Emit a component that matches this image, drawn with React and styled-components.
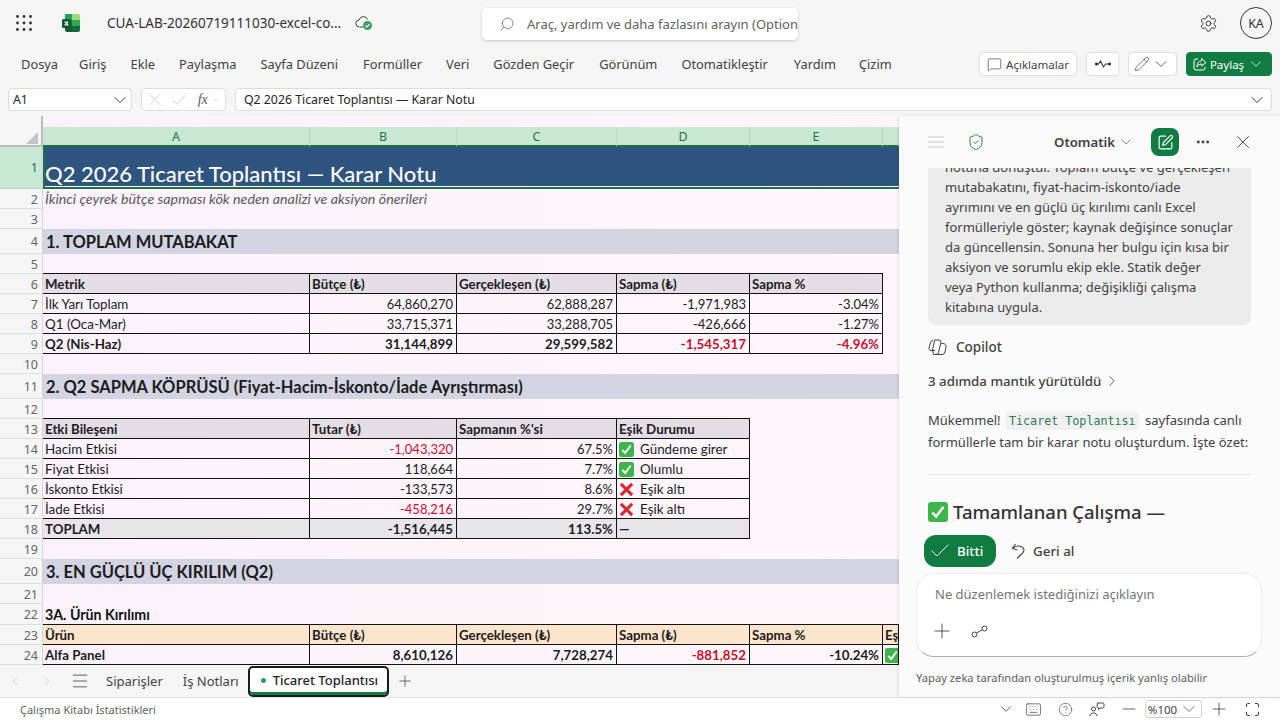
import React from "react";
import styled, { createGlobalStyle } from "styled-components";
import {
  Search,
  Settings,
  MessageSquare,
  Pencil,
  ChevronDown,
  ChevronLeft,
  ChevronRight,
  X,
  Check,
  ShieldCheck,
  SquarePen,
  Ellipsis,
  Plus,
  Minus,
  Menu,
  Keyboard,
  CircleHelp,
} from "lucide-react";

const UI = '"Noto Sans", "Open Sans", sans-serif';
const SHEET = 'Lato, "Noto Sans", sans-serif';
const GREEN = "#107c41";

const GlobalStyle = createGlobalStyle`
  html, body { margin: 0; padding: 0; height: 100%; overflow: hidden; }
  body { font-family: ${UI}; background: #f5f5f5; color: #242424; }
  * { box-sizing: border-box; }
`;

const Page = styled.div`
  width: 1280px;
  height: 720px;
  display: flex;
  flex-direction: column;
  overflow: hidden;
`;

/* title bar */
const TitleBar = styled.div`
  height: 44px;
  flex: none;
  display: flex;
  align-items: center;
  padding: 2px 8px 0 16px;
`;
const AppIcon = styled.div`
  display: flex;
  flex: none;
  margin-left: ${(p) => p.$ml || 0}px;
  margin-right: ${(p) => p.$mr || 0}px;
`;
const FileName = styled.div`
  margin-left: 27px;
  width: 249px;
  font-size: 13.5px;
  color: #333;
  white-space: nowrap;
`;
const SearchBox = styled.div`
  position: absolute;
  left: 482px;
  top: 8px;
  width: 316px;
  height: 32px;
  background: #fff;
  border-radius: 5px;
  box-shadow: 0 1px 3px rgba(0, 0, 0, 0.18);
  display: flex;
  align-items: center;
  padding-left: 17px;
  gap: 12px;
  overflow: hidden;
  font-size: 13px;
  color: #616161;
  white-space: nowrap;
  svg { transform: scaleX(-1); flex: none; }
`;
const TitleRight = styled.div`
  margin-left: auto;
  display: flex;
  align-items: center;
  gap: 22px;
`;
const Avatar = styled.div`
  width: 32px;
  height: 32px;
  border: 1px solid #333;
  border-radius: 50%;
  display: flex;
  align-items: center;
  justify-content: center;
  font-size: 12.5px;
  color: #333;
`;

/* ribbon tabs */
const Ribbon = styled.div`
  height: 40px;
  flex: none;
  display: flex;
  align-items: center;
  padding: 0 8px 0 21px;
`;
const RibbonTab = styled.div`
  font-size: 12.85px;
  color: #424242;
  margin-right: ${(p) => p.$gap}px;
  white-space: nowrap;
`;
const RibbonActions = styled.div`
  margin-left: auto;
  display: flex;
  gap: 9px;
`;
const ToolButton = styled.div`
  height: 24px;
  width: ${(p) => p.$w}px;
  display: flex;
  align-items: center;
  justify-content: center;
  gap: ${(p) => p.$gap ?? 4}px;
  background: ${(p) => (p.$primary ? GREEN : "#fff")};
  color: ${(p) => (p.$primary ? "#fff" : "#424242")};
  border: 1px solid ${(p) => (p.$primary ? GREEN : "#dedede")};
  border-radius: 4px;
  font-size: 11.5px;
`;

/* formula bar */
const FormulaBar = styled.div`
  height: 32px;
  flex: none;
  display: flex;
  padding: 4px 8px 5px;
  gap: 9px;
`;
const Field = styled.div`
  width: ${(p) => (p.$w ? `${p.$w}px` : "auto")};
  flex: ${(p) => (p.$w ? "none" : "1")};
  background: #fff;
  border: 1px solid #dcdcdc;
  border-radius: 4px;
  display: flex;
  align-items: center;
  justify-content: ${(p) => p.$justify || "space-between"};
  gap: ${(p) => p.$gap || 0}px;
  padding: 0 ${(p) => p.$pad ?? 4}px;
  font-size: 12.3px;
  color: #242424;
  white-space: nowrap;
`;
const FxLabel = styled.span`
  font-family: "Liberation Serif", serif;
  font-style: italic;
  font-size: 14px;
  color: #555;
  margin-right: -7px;
`;

/* main */
const Main = styled.div`
  flex: 1;
  min-height: 0;
  display: flex;
`;
const SheetColumn = styled.div`
  width: 899px;
  flex: none;
  display: flex;
  flex-direction: column;
`;
const Sheet = styled.div`
  height: 549px;
  flex: none;
  overflow: hidden;
  background: linear-gradient(90deg, #faf1fc 0%, #fdf4fb 55%, #fef6fa 100%);
  font-family: ${SHEET};
`;
const SheetGap = styled.div`
  height: 11px;
  background: #f5f5f5;
  width: 43px;
  border-right: 2px solid #bdbdbd;
`;
const COLS = "43px 267px 147px 160px 133px 133px 16px";
const Row = styled.div`
  display: grid;
  grid-template-columns: ${COLS};
  grid-template-rows: minmax(0, 1fr);
  height: ${(p) => p.$h || 20}px;
`;
const Corner = styled.div`
  background: #f5f5f5;
  border-right: 2px solid #bdbdbd;
  border-bottom: 2px solid #bdbdbd;
  position: relative;
  &::after {
    content: "";
    position: absolute;
    right: 3px;
    bottom: 1px;
    border-style: solid;
    border-width: 0 0 12px 12px;
    border-color: transparent transparent #c4c4c4 transparent;
  }
`;
const ColHead = styled.div`
  background: #c8e8d4;
  border-bottom: 2px solid #1e7145;
  border-right: 1px solid #b4dcc4;
  color: #217346;
  font: 12.5px ${UI};
  display: flex;
  align-items: center;
  justify-content: center;
`;
const RowHead = styled.div`
  background: ${(p) => (p.$active ? "#c8e8d4" : "#f5f5f5")};
  color: ${(p) => (p.$active ? "#217346" : "#666")};
  border-bottom: 1px solid ${(p) => (p.$active ? "#b4dcc4" : "#dedede")};
  border-right: 1px solid #d4d4d4;
  font: 12.5px ${UI};
  display: flex;
  align-items: center;
  justify-content: flex-end;
  padding: ${(p) => (p.$active ? "0 4px 0 0" : "1px 4px 0 0")};
`;
const TitleCell = styled.div`
  grid-column: 2 / -1;
  background: #2f5480;
  border-left: 2px solid #1e7145;
  border-bottom: 2px solid #1e7145;
  box-shadow: inset 0 -1px 0 #fff;
  color: #fff;
  font-size: 22px;
  font-weight: 500;
  padding: 14px 0 0;
  line-height: 26px;
  white-space: nowrap;
`;
const Subtitle = styled.div`
  grid-column: 2 / -1;
  padding-left: 2px;
  font-size: 14.3px;
  font-style: italic;
  color: #595959;
  line-height: 20px;
  white-space: nowrap;
`;
const Band = styled.div`
  grid-column: 2 / -1;
  background: #d3d4e1;
  font-size: 16.5px;
  font-weight: 700;
  color: #1c1c1c;
  padding: 1px 0 0 3px;
  line-height: 24px;
  white-space: nowrap;
`;
const SubHead = styled.div`
  grid-column: 2 / -1;
  font-size: 14.2px;
  font-weight: 700;
  color: #111;
  padding-left: 2px;
  line-height: 21px;
`;
const Cell = styled.div`
  border-right: 1px solid #111;
  border-bottom: 1px solid #111;
  box-shadow: ${(p) => (p.$top ? "0 -1px 0 #111" : "none")};
  background: ${(p) => p.$bg || "transparent"};
  color: ${(p) => p.$color || "#1c1c1c"};
  font-size: ${(p) => (p.$bold ? 13.3 : p.$right ? 13 : 13.4)}px;
  font-weight: ${(p) => (p.$bold ? 700 : 400)};
  text-align: ${(p) => (p.$right ? "right" : "left")};
  padding: 1px 3px 0 2px;
  line-height: 18px;
  white-space: nowrap;
  overflow: hidden;
  display: ${(p) => (p.$status ? "flex" : "block")};
  align-items: center;
  svg { flex: none; }
`;
const StatusText = styled.span`
  margin-left: 6px;
`;

/* sheet tabs */
const TabBar = styled.div`
  flex: 1;
  display: flex;
  align-items: center;
  background: #f5f5f5;
  padding-left: 8px;
  color: #424242;
  font-size: 13px;
`;
const NavArrow = styled.div`
  width: 32px;
  display: flex;
  justify-content: flex-start;
  color: #c4c4c4;
`;
const SheetTab = styled.div`
  margin-right: 20px;
  white-space: nowrap;
`;
const ActiveTab = styled.div`
  width: 141px;
  height: 31px;
  margin-left: -11px;
  border: 2px solid #1b1b1b;
  border-radius: 5px;
  background: #fff;
  box-shadow: inset 0 -3px 0 ${GREEN};
  display: flex;
  align-items: center;
  padding: 0 0 2px 11px;
  gap: 7px;
  font-weight: 500;
  color: #242424;
  white-space: nowrap;
`;
const Dot = styled.span`
  width: 5px;
  height: 5px;
  border-radius: 50%;
  background: #2f9e5f;
`;

/* copilot panel */
const Panel = styled.div`
  flex: 1;
  min-width: 0;
  background: #fafafa;
  box-shadow: -1px 0 3px rgba(0, 0, 0, 0.1);
  display: flex;
  flex-direction: column;
  position: relative;
`;
const PanelHeader = styled.div`
  height: 52px;
  flex: none;
  display: flex;
  align-items: center;
  padding: 0 28px 0 29px;
  color: #424242;
`;
const PanelTitle = styled.div`
  margin-left: 69px;
  width: 97px;
  display: flex;
  align-items: center;
  gap: 3px;
  font-size: 13.2px;
  font-weight: 600;
  color: #424242;
`;
const NewChat = styled.div`
  width: 28px;
  height: 28px;
  background: ${GREEN};
  border-radius: 8px;
  display: flex;
  align-items: center;
  justify-content: center;
  color: #fff;
`;
const Messages = styled.div`
  flex: 1;
  min-height: 0;
  overflow: hidden;
  display: flex;
  flex-direction: column;
  justify-content: flex-end;
  padding: 0 29px;
  font-size: 13px;
  color: #424242;
`;
const Bubble = styled.div`
  flex: none;
  background: #ebebeb;
  border-radius: 8px;
  padding: 0 12px 8px 17px;
  line-height: 20px;
  white-space: nowrap;
`;
const Sender = styled.div`
  margin-top: 13px;
  display: flex;
  align-items: center;
  gap: 9px;
  height: 20px;
  font-size: 13.5px;
  font-weight: 500;
  color: #424242;
`;
const Reasoning = styled.div`
  margin-top: 16px;
  display: flex;
  align-items: center;
  gap: 2px;
  height: 20px;
  font-size: 13.3px;
  font-weight: 500;
`;
const Reply = styled.div`
  margin-top: 20px;
  line-height: 21px;
  white-space: nowrap;
`;
const Chip = styled.code`
  font-family: "DejaVu Sans Mono", monospace;
  font-size: 11.7px;
  color: #2c7a56;
  background: #f0f0f0;
  padding: 2px 3px;
  margin: 0 3px 0 2px;
  border-radius: 3px;
`;
const Divider = styled.div`
  flex: none;
  height: 1px;
  background: #e6e6e6;
  margin-top: 21px;
`;
const Heading = styled.div`
  margin-top: 22px;
  display: flex;
  align-items: center;
  gap: 5px;
  font-size: 18.5px;
  font-weight: 500;
  line-height: 30px;
  color: #333;
  white-space: nowrap;
`;
const Actions = styled.div`
  flex: none;
  margin-top: 8px;
  padding-left: 25px;
  height: 32px;
  display: flex;
  align-items: center;
  font-size: 13.4px;
`;
const DoneButton = styled.div`
  width: 72px;
  height: 32px;
  border-radius: 12px;
  background: ${GREEN};
  color: #fff;
  display: flex;
  align-items: center;
  gap: 5px;
  padding-left: 4px;
  font-weight: 500;
`;
const UndoButton = styled.div`
  margin-left: 15px;
  display: flex;
  align-items: center;
  gap: 7px;
  font-weight: 500;
  color: #424242;
`;
const Composer = styled.div`
  flex: none;
  margin: 6px 18px 0 17px;
  height: 84px;
  background: #fff;
  border: 1px solid #ececec;
  border-bottom-color: #b0b0b0;
  border-radius: 18px;
  padding: 11px 18px 0;
  font-size: 13px;
  color: #757575;
`;
const ComposerTools = styled.div`
  margin: 16px 0 0 -5px;
  display: flex;
  align-items: center;
  gap: 17px;
  color: #555;
`;
const Disclaimer = styled.div`
  flex: none;
  height: 40px;
  padding: 13px 0 0 17px;
  font-size: 11.2px;
  color: #616161;
  white-space: nowrap;
`;

/* status bar */
const StatusBar = styled.div`
  height: 23px;
  flex: none;
  background: #fff;
  border-top: 1px solid #dedede;
  display: flex;
  align-items: center;
  padding: 0 12px 0 20px;
  font-size: 11px;
  color: #616161;
`;
const StatusTools = styled.div`
  margin-left: auto;
  display: flex;
  align-items: center;
  color: #424242;
`;
const StatusIcon = styled.div`
  width: ${(p) => p.$w || 32}px;
  height: 20px;
  display: flex;
  align-items: center;
  justify-content: center;
`;
const ZoomBox = styled.div`
  width: 57px;
  height: 18px;
  border: 1px solid #d0d0d0;
  border-radius: 3px;
  display: flex;
  align-items: center;
  justify-content: center;
  gap: 2px;
  font-size: 11.5px;
`;

/* drawn icons */
const Waffle = () => (
  <svg width="16" height="16" viewBox="0 0 16 16" fill="#333">
    {[1.5, 8, 14.5].flatMap((y) =>
      [1.5, 8, 14.5].map((x) => <circle key={`${x}-${y}`} cx={x} cy={y} r="1.4" />)
    )}
  </svg>
);
const ExcelLogo = () => (
  <svg width="18" height="18" viewBox="0 0 18 18">
    <rect x="3" y="0" width="7" height="6" fill="#21a366" />
    <path d="M10 0h6a2 2 0 0 1 2 2v4h-8z" fill="#a5d86e" />
    <rect x="3" y="6" width="7" height="6" fill="#107c41" />
    <rect x="10" y="6" width="8" height="6" fill="#33a852" />
    <path d="M3 12h7v6H5a2 2 0 0 1-2-2z" fill="#185c37" />
    <path d="M10 12h8v4a2 2 0 0 1-2 2h-6z" fill="#0f6b38" />
    <rect x="0" y="5" width="9" height="9" rx="1.5" fill="#0b5a2e" />
    <path d="M2.8 7.5l3.4 4M6.2 7.5l-3.4 4" stroke="#fff" strokeWidth="1.2" />
  </svg>
);
const CloudCheck = () => (
  <svg width="18" height="18" viewBox="0 0 18 18" fill="none">
    <path d="M5 13h3M4.5 13a3.5 3.5 0 0 1-.4-7 4.5 4.5 0 0 1 8.6-.4" stroke="#424242" strokeWidth="1" />
    <circle cx="12.5" cy="11.5" r="4.5" fill="#3c9d5e" />
    <path d="M10.5 11.5l1.5 1.5 2.5-2.8" stroke="#fff" strokeWidth="1.1" />
  </svg>
);
const ShareIcon = () => (
  <svg width="14" height="14" viewBox="0 0 14 14" fill="none" stroke="#fff" strokeWidth="1">
    <path d="M5 2H3a2 2 0 0 0-2 2v7a2 2 0 0 0 2 2h7a2 2 0 0 0 2-2v-1" />
    <path d="M8.5 1.5L13 5.5 8.5 9V7C6.5 7 5 8 4 10c0-3.5 1.5-6 4.5-6z" />
  </svg>
);
const PulseIcon = () => (
  <svg width="16" height="10" viewBox="0 0 16 10" fill="none" stroke="#333" strokeWidth="1.1">
    <path d="M1 5h2.500L5.500 2l3 6 2-3H15" />
    <circle cx="1.500" cy="5" r="1" fill="#333" />
    <circle cx="14.500" cy="5" r="1" fill="#333" />
  </svg>
);
const CancelMark = () => (
  <svg width="15" height="15" viewBox="0 0 15 15" fill="none" stroke="#cfcfcf" strokeWidth="1">
    <path d="M1 1l13 13M14 1L1 14" />
  </svg>
);
const ConfirmMark = () => (
  <svg width="16" height="13" viewBox="0 0 16 13" fill="none" stroke="#cfcfcf" strokeWidth="1">
    <path d="M1 7l5 5L15.500 1" />
  </svg>
);
const CheckEmoji = ({ size = 15 }) => (
  <svg width={size} height={size} viewBox="0 0 16 16">
    <rect width="16" height="16" rx="2.500" fill="#3cb54a" />
    <path d="M3.500 8.500l3 3.200 6-8" fill="none" stroke="#fff" strokeWidth="2" />
  </svg>
);
const CrossEmoji = () => (
  <svg width="15" height="15" viewBox="0 0 16 16">
    <path d="M2 2l12 12M14 2L2 14" stroke="#dd2530" strokeWidth="3.200" />
  </svg>
);
const CopilotIcon = () => (
  <svg width="19" height="17" viewBox="0 0 19 17" fill="none" stroke="#424242" strokeWidth="1">
    <path d="M6 1h5a2 2 0 0 1 2 2L10.500 13.500a2.500 2.500 0 0 1-2.400 2H5.500" />
    <path d="M5 1.500a2.500 2.500 0 0 0-2.400 1.800L1 9a2 2 0 0 0 2 2.500h4" />
    <path d="M13.500 4.500H15a3 3 0 0 1 3 3.500l-1 5a3 3 0 0 1-3 2.500H8" />
    <path d="M6.500 1.500L4.500 11 5.500 15.500" />
  </svg>
);
const UndoIcon = () => (
  <svg width="15" height="17" viewBox="0 0 15 17" fill="none" stroke="#424242" strokeWidth="1.1">
    <path d="M4.500 1L1.500 5.500 6.500 7" />
    <path d="M1.500 5.500C4 3 8 2.500 11 4c3 1.700 2.500 5-1 7.500L6 15.500" />
  </svg>
);
const LinkNodes = () => (
  <svg width="17" height="13" viewBox="0 0 17 13" fill="none" stroke="#424242" strokeWidth="1">
    <circle cx="3.500" cy="9.500" r="2.500" />
    <circle cx="13.500" cy="3.500" r="2.500" />
    <path d="M5.500 8l6-3.500" />
  </svg>
);
const Feedback = () => (
  <svg width="16" height="15" viewBox="0 0 16 15" fill="none" stroke="#424242" strokeWidth="1">
    <circle cx="4.500" cy="7" r="2" />
    <path d="M1 14c0-4 7-4 7 0" />
    <path d="M8.500 1h5a1.500 1.500 0 0 1 1.500 1.500v2A1.500 1.500 0 0 1 13.500 6H11l-1.500 1.500V6A1.500 1.500 0 0 1 8 4.500z" />
  </svg>
);
const FullScreen = () => (
  <svg width="13" height="13" viewBox="0 0 13 13" fill="none" stroke="#424242" strokeWidth="1">
    <path d="M.5 4V2A1.500 1.500 0 0 1 2 .5h2M9 .5h2A1.500 1.500 0 0 1 12.500 2v2M12.500 9v2A1.500 1.500 0 0 1 11 12.500H9M4 12.500H2A1.500 1.500 0 0 1 .5 11V9" />
  </svg>
);
const TwoLines = () => (
  <svg width="16" height="12" viewBox="0 0 16 12" stroke="#c8c8c8" strokeWidth="1">
    <path d="M0 1h16M0 6h16M0 11h16" />
  </svg>
);

const TABS = [
  ["Dosya", 21], ["Giriş", 24], ["Ekle", 24], ["Paylaşma", 24], ["Sayfa Düzeni", 25], ["Formüller", 24],
  ["Veri", 24], ["Gözden Geçir", 25], ["Görünüm", 24], ["Otomatikleştir", 26], ["Yardım", 23], ["Çizim", 0],
];

const RED = "#c8102e";
const HEAD = "#e5dde5";
const TOTAL = "#e9e4ea";
const ORANGE = "#fce5cd";

const DataRow = ({ n, cells, bg, bold, top }) => (
  <Row>
    <RowHead>{n}</RowHead>
    {cells.map((c, i) => {
      const isObj = c && typeof c === "object";
      return (
        <Cell
          key={i}
          $bg={bg}
          $top={top}
          $bold={bold}
          $right={isObj && c.r}
          $color={isObj ? c.c : undefined}
          $status={isObj && c.s}
        >
          {isObj ? c.t : c}
        </Cell>
      );
    })}
  </Row>
);

const num = (t, c) => ({ t, r: true, c });
const status = (ok, label) => ({
  s: true,
  t: (
    <>
      {ok ? <CheckEmoji /> : <CrossEmoji />}
      <StatusText>{label}</StatusText>
    </>
  ),
});

const Blank = ({ n, h }) => (
  <Row $h={h}>
    <RowHead>{n}</RowHead>
  </Row>
);

const Worksheet = () => (
  <Sheet>
    <SheetGap />
    <Row $h={20}>
      <Corner />
      {["A", "B", "C", "D", "E", ""].map((c, i) => (
        <ColHead key={i}>{c}</ColHead>
      ))}
    </Row>
    <Row $h={42}>
      <RowHead $active>1</RowHead>
      <TitleCell>Q2 2026 Ticaret Toplantısı — Karar Notu</TitleCell>
    </Row>
    <Row>
      <RowHead>2</RowHead>
      <Subtitle>İkinci çeyrek bütçe sapması kök neden analizi ve aksiyon önerileri</Subtitle>
    </Row>
    <Blank n={3} />
    <Row $h={25}>
      <RowHead>4</RowHead>
      <Band>1. TOPLAM MUTABAKAT</Band>
    </Row>
    <Blank n={5} />
    <DataRow n={6} bg={HEAD} bold top cells={["Metrik", "Bütçe (₺)", "Gerçekleşen (₺)", "Sapma (₺)", "Sapma %"]} />
    <DataRow n={7} cells={["İlk Yarı Toplam", num("64,860,270"), num("62,888,287"), num("-1,971,983"), num("-3.04%")]} />
    <DataRow n={8} cells={["Q1 (Oca-Mar)", num("33,715,371"), num("33,288,705"), num("-426,666"), num("-1.27%")]} />
    <DataRow n={9} bold cells={["Q2 (Nis-Haz)", num("31,144,899"), num("29,599,582"), num("-1,545,317", RED), num("-4.96%", RED)]} />
    <Blank n={10} />
    <Row $h={25}>
      <RowHead>11</RowHead>
      <Band>2. Q2 SAPMA KÖPRÜSÜ (Fiyat-Hacim-İskonto/İade Ayrıştırması)</Band>
    </Row>
    <Blank n={12} />
    <DataRow n={13} bg={HEAD} bold top cells={["Etki Bileşeni", "Tutar (₺)", "Sapmanın %'si", "Eşik Durumu"]} />
    <DataRow n={14} cells={["Hacim Etkisi", num("-1,043,320", RED), num("67.5%"), status(true, "Gündeme girer")]} />
    <DataRow n={15} cells={["Fiyat Etkisi", num("118,664"), num("7.7%"), status(true, "Olumlu")]} />
    <DataRow n={16} cells={["İskonto Etkisi", num("-133,573"), num("8.6%"), status(false, "Eşik altı")]} />
    <DataRow n={17} cells={["İade Etkisi", num("-458,216", RED), num("29.7%"), status(false, "Eşik altı")]} />
    <DataRow n={18} bg={TOTAL} bold cells={["TOPLAM", num("-1,516,445"), num("113.5%"), "—"]} />
    <Blank n={19} />
    <Row $h={25}>
      <RowHead>20</RowHead>
      <Band>3. EN GÜÇLÜ ÜÇ KIRILIM (Q2)</Band>
    </Row>
    <Blank n={21} />
    <Row $h={21}>
      <RowHead>22</RowHead>
      <SubHead>3A. Ürün Kırılımı</SubHead>
    </Row>
    <DataRow n={23} bg={ORANGE} bold top cells={["Ürün", "Bütçe (₺)", "Gerçekleşen (₺)", "Sapma (₺)", "Sapma %", "Eşik"]} />
    <DataRow n={24} bold cells={["Alfa Panel", num("8,610,126"), num("7,728,274"), num("-881,852", RED), num("-10.24%"), { s: true, t: <CheckEmoji /> }]} />
  </Sheet>
);

const Copilot = () => (
  <Panel>
    <PanelHeader>
      <TwoLines />
      <AppIcon $ml={23}>
        <ShieldCheck size={18} strokeWidth={1.2} color={GREEN} />
      </AppIcon>
      <PanelTitle>
        Otomatik <ChevronDown size={16} strokeWidth={1} />
      </PanelTitle>
      <NewChat>
        <SquarePen size={17} strokeWidth={1.6} />
      </NewChat>
      <AppIcon $ml={16}>
        <Ellipsis size={16} strokeWidth={2.2} />
      </AppIcon>
      <AppIcon $ml={21} $mr={-2}>
        <X size={22} strokeWidth={1} />
      </AppIcon>
    </PanelHeader>
    <Messages>
      <Bubble>
        notuna dönüştür. Toplam bütçe ve gerçekleşen
        <br />
        mutabakatını, fiyat-hacim-iskonto/iade
        <br />
        ayrımını ve en güçlü üç kırılımı canlı Excel
        <br />
        formülleriyle göster; kaynak değişince sonuçlar
        <br />
        da güncellensin. Sonuna her bulgu için kısa bir
        <br />
        aksiyon ve sorumlu ekip ekle. Statik değer
        <br />
        veya Python kullanma; değişikliği çalışma
        <br />
        kitabına uygula.
      </Bubble>
      <Sender>
        <CopilotIcon /> Copilot
      </Sender>
      <Reasoning>
        3 adımda mantık yürütüldü <ChevronRight size={18} strokeWidth={1.1} />
      </Reasoning>
      <Reply>
        Mükemmel! <Chip>Ticaret Toplantısı</Chip> sayfasında canlı
        <br />
        formüllerle tam bir karar notu oluşturdum. İşte özet:
      </Reply>
      <Divider />
      <Heading>
        <CheckEmoji size={20} /> Tamamlanan Çalışma —
      </Heading>
    </Messages>
    <Actions>
      <DoneButton>
        <Check size={24} strokeWidth={1} /> Bitti
      </DoneButton>
      <UndoButton>
        <UndoIcon /> Geri al
      </UndoButton>
    </Actions>
    <Composer>
      Ne düzenlemek istediğinizi açıklayın
      <ComposerTools>
        <Plus size={24} strokeWidth={1} />
        <LinkNodes />
      </ComposerTools>
    </Composer>
    <Disclaimer>Yapay zeka tarafından oluşturulmuş içerik yanlış olabilir</Disclaimer>
  </Panel>
);

export default function App() {
  return (
    <Page>
      <GlobalStyle />
      <TitleBar>
        <Waffle />
        <AppIcon $ml={30}>
          <ExcelLogo />
        </AppIcon>
        <FileName>CUA-LAB-20260719111030-excel-co...</FileName>
        <AppIcon $ml={-1}>
          <CloudCheck />
        </AppIcon>
        <SearchBox>
          <Search size={16} strokeWidth={1.1} />
          Araç, yardım ve daha fazlasını arayın (Option+Q)
        </SearchBox>
        <TitleRight>
          <Settings size={19} strokeWidth={1.2} color="#333" />
          <Avatar>KA</Avatar>
        </TitleRight>
      </TitleBar>
      <Ribbon>
        {TABS.map(([t, gap]) => (
          <RibbonTab key={t} $gap={gap}>
            {t}
          </RibbonTab>
        ))}
        <RibbonActions>
          <ToolButton $w={98}>
            <MessageSquare size={15} strokeWidth={1.1} /> Açıklamalar
          </ToolButton>
          <ToolButton $w={33}>
            <PulseIcon />
          </ToolButton>
          <ToolButton $w={49} $gap={1}>
            <Pencil size={16} strokeWidth={1.1} />
            <ChevronDown size={20} strokeWidth={1} />
          </ToolButton>
          <ToolButton $w={86} $primary $gap={3}>
            <ShareIcon /> Paylaş <ChevronDown size={18} strokeWidth={1} />
          </ToolButton>
        </RibbonActions>
      </Ribbon>
      <FormulaBar>
        <Field $w={124}>
          A1
          <AppIcon $mr={-3}>
            <ChevronDown size={20} strokeWidth={1.1} />
          </AppIcon>
        </Field>
        <Field $w={85} $justify="flex-start" $gap={11} $pad={6}>
          <CancelMark />
          <ConfirmMark />
          <FxLabel>fx</FxLabel>
          <ChevronDown size={8} strokeWidth={1.2} color="#999" />
        </Field>
        <Field $pad={8}>
          Q2 2026 Ticaret Toplantısı — Karar Notu
          <AppIcon $mr={-4}>
            <ChevronDown size={20} strokeWidth={1.1} />
          </AppIcon>
        </Field>
      </FormulaBar>
      <Main>
        <SheetColumn>
          <Worksheet />
          <TabBar>
            <NavArrow>
              <ChevronLeft size={14} strokeWidth={1.1} />
            </NavArrow>
            <NavArrow>
              <ChevronRight size={14} strokeWidth={1.1} />
            </NavArrow>
            <AppIcon $ml={-2} $mr={16}>
              <Menu size={20} strokeWidth={1} />
            </AppIcon>
            <SheetTab>Siparişler</SheetTab>
            <SheetTab>İş Notları</SheetTab>
            <ActiveTab>
              <Dot /> Ticaret Toplantısı
            </ActiveTab>
            <AppIcon $ml={7}>
              <Plus size={18} strokeWidth={1} />
            </AppIcon>
          </TabBar>
        </SheetColumn>
        <Copilot />
      </Main>
      <StatusBar>
        Çalışma Kitabı İstatistikleri
        <StatusTools>
          <StatusIcon $w={22}>
            <ChevronDown size={18} strokeWidth={1.1} />
          </StatusIcon>
          <StatusIcon>
            <Keyboard size={17} strokeWidth={1} />
          </StatusIcon>
          <StatusIcon>
            <CircleHelp size={15} strokeWidth={1} />
          </StatusIcon>
          <StatusIcon>
            <Feedback />
          </StatusIcon>
          <StatusIcon>
            <Minus size={20} strokeWidth={1} />
          </StatusIcon>
          <ZoomBox>
            %100 <ChevronDown size={20} strokeWidth={0.9} />
          </ZoomBox>
          <StatusIcon $w={34}>
            <Plus size={20} strokeWidth={1} />
          </StatusIcon>
          <StatusIcon>
            <FullScreen />
          </StatusIcon>
        </StatusTools>
      </StatusBar>
    </Page>
  );
}
